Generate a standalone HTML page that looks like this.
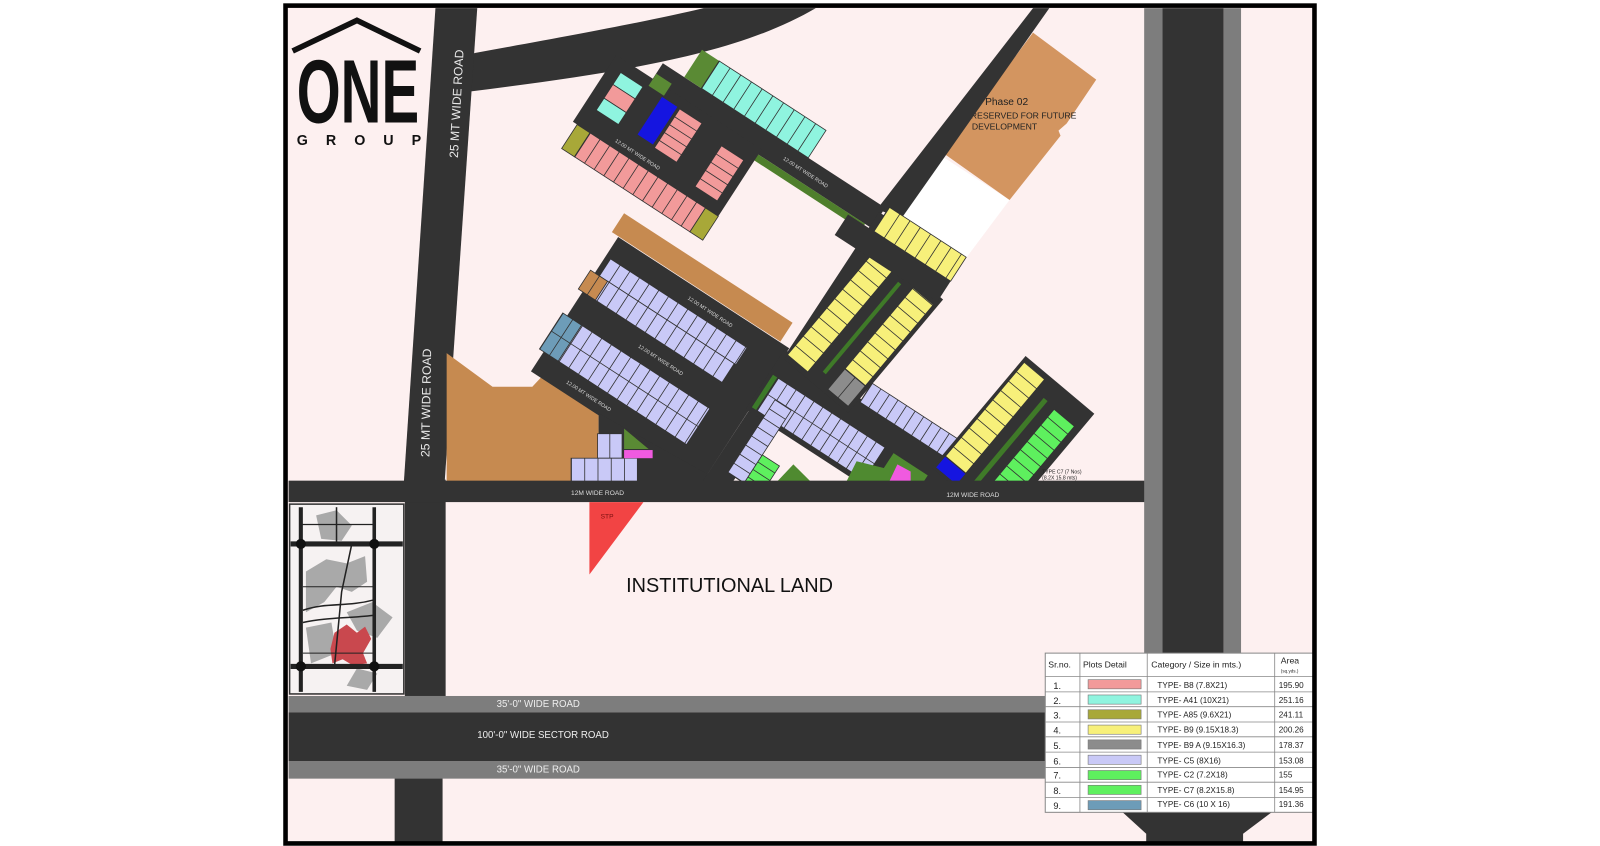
<!DOCTYPE html>
<html><head><meta charset="utf-8"><style>
html,body{margin:0;padding:0;background:#fff;width:1600px;height:846px;overflow:hidden}
svg{display:block}
text{font-family:"Liberation Sans",sans-serif}
</style></head><body>
<svg width="1600" height="846" viewBox="0 0 1569 829" preserveAspectRatio="none" xmlns="http://www.w3.org/2000/svg">
<defs><clipPath id="cl"><rect x="283" y="8" width="840" height="465"/></clipPath></defs>
<rect x="0" y="0" width="1569" height="829" fill="#fff"/>
<rect x="280" y="5" width="1009" height="822" fill="#fdf0f0"/>

<!-- curved road -->
<path d="M465,52 C560,35 640,20 690,8 L800,8 C720,55 600,72 458,90 Z" fill="#333"/>
<!-- left vertical road -->
<polygon points="427,8 468,8 436,473 396,473" fill="#333"/>
<rect x="397" y="470" width="40" height="212" fill="#333"/>
<rect x="387" y="760" width="47" height="68" fill="#333"/>
<!-- brown area -->
<polygon points="438,346 483,379 522,379 536,364 587,407 587,474 438,474" fill="#c68a50"/>

<!-- phase 02 -->
<polygon points="922,152 990,196 948,252 872,203" fill="#ffffff"/>
<polygon points="1013,32 1075,78 1046,121 1038,128 1040,133 990,196 925,150" fill="#d39560"/>
<text x="966" y="103" font-size="10" fill="#222">Phase 02</text>
<text x="952" y="116" font-size="8.5" fill="#222">RESERVED FOR FUTURE</text>
<text x="953" y="127" font-size="8.5" fill="#222">DEVELOPMENT</text>
<!-- NE road -->
<polygon points="1013,8 1029,8 884,214 860,205" fill="#333"/>

<g clip-path="url(#cl)">
<!-- R1 road + cyan row -->
<g transform="translate(650,62) rotate(33)">
<rect x="0" y="0" width="260" height="24" fill="#333"/>
<rect x="25" y="-32" width="20" height="32" fill="#5a8a34"/>
<rect x="45" y="-32" width="125" height="32" fill="#8ff4df" stroke="#333" stroke-width=".8"/>
<line x1="45" y1="-16" x2="170" y2="-16" stroke="#333" stroke-width="32" stroke-dasharray="0.8 11.7"/>
<rect x="112" y="24" width="140" height="7" fill="#4f7f2c"/>
<text x="150" y="15" font-size="5" fill="#ddd">12.00 MT WIDE ROAD</text>
</g>
<!-- pink cluster -->
<g transform="translate(566,122) rotate(33)">
<rect x="-5" y="-78" width="170" height="78" fill="#333"/>
<rect x="0" y="0" width="15" height="28" fill="#a8a838" stroke="#333" stroke-width=".8"/>
<rect x="15" y="0" width="135" height="28" fill="#f29a9a" stroke="#333" stroke-width=".8"/>
<line x1="15" y1="14" x2="150" y2="14" stroke="#333" stroke-width="28" stroke-dasharray="0.8 10.5"/>
<rect x="150" y="0" width="15" height="28" fill="#a8a838" stroke="#333" stroke-width=".8"/>
<rect x="8" y="-66" width="26" height="14" fill="#8ff4df" stroke="#333" stroke-width=".8"/>
<rect x="8" y="-52" width="26" height="16" fill="#f29a9a" stroke="#333" stroke-width=".8"/>
<rect x="8" y="-36" width="26" height="14" fill="#8ff4df" stroke="#333" stroke-width=".8"/>
<rect x="38" y="-84" width="18" height="14" fill="#5a8a34"/>
<rect x="55" y="-68" width="18" height="44" fill="#1515e0"/>
<rect x="76" y="-68" width="26" height="46" fill="#f29a9a" stroke="#333" stroke-width=".8"/>
<line x1="89" y1="-68" x2="89" y2="-22" stroke="#333" stroke-width="26" stroke-dasharray="0.8 8.4"/>
<rect x="130" y="-60" width="26" height="48" fill="#f29a9a" stroke="#333" stroke-width=".8"/>
<line x1="143" y1="-60" x2="143" y2="-12" stroke="#333" stroke-width="26" stroke-dasharray="0.8 8.8"/>
<text x="40" y="-6" font-size="5" fill="#ddd">12.00 MT WIDE ROAD</text>
</g>
<!-- brown band -->
<g transform="translate(612,209) rotate(33)"><rect width="197" height="22" fill="#c68a50"/></g>
<!-- lavender blocks -->
<g transform="translate(590,248) rotate(33)">
<rect x="5" y="-22" width="200" height="157" fill="#333"/>
<rect x="10" y="0" width="160" height="20" fill="#c9c9f7" stroke="#333" stroke-width=".8"/>
<rect x="0" y="20" width="20" height="22" fill="#c68a50" stroke="#333" stroke-width=".8"/>
<rect x="20" y="20" width="148" height="22" fill="#c9c9f7" stroke="#333" stroke-width=".8"/>
<line x1="10" y1="21" x2="170" y2="21" stroke="#333" stroke-width="42" stroke-dasharray="0.8 10.5"/>
<rect x="0" y="70" width="22" height="42" fill="#6d9cb8" stroke="#333" stroke-width=".8"/>
<rect x="22" y="70" width="150" height="42" fill="#c9c9f7" stroke="#333" stroke-width=".8"/>
<line x1="0" y1="91" x2="172" y2="91" stroke="#333" stroke-width="42" stroke-dasharray="0.8 10.5"/>
<line x1="0" y1="91" x2="172" y2="91" stroke="#333" stroke-width=".8"/>
<text x="80" y="58" font-size="5" fill="#ddd">12.00 MT WIDE ROAD</text>
<text x="40" y="126" font-size="5" fill="#ddd">12.00 MT WIDE ROAD</text>
<text x="95" y="-8" font-size="5" fill="#ddd">12.00 MT WIDE ROAD</text>
</g>
<polygon points="587,405 700,468 705,474 587,474" fill="#333"/>
<rect x="586" y="425" width="24" height="24" fill="#c9c9f7" stroke="#333" stroke-width=".8"/>
<line x1="598" y1="425" x2="598" y2="449" stroke="#333" stroke-width=".8"/>
<rect x="560" y="449" width="65" height="24" fill="#c9c9f7" stroke="#333" stroke-width=".8"/>
<line x1="560" y1="461" x2="625" y2="461" stroke="#333" stroke-width="24" stroke-dasharray="0.8 12.2"/>
<polygon points="612,420 612,440 636,440" fill="#5a8a34"/>
<rect x="612" y="441" width="28" height="8" fill="#f05ae0"/>
<!-- D1 road -->
<polygon points="688,473 718,473 885,222 862,208" fill="#333"/>
<!-- lower lavender -->
<g transform="translate(775,352) rotate(33)">
<rect x="-10" y="-5" width="205" height="70" fill="#333"/>
<rect x="80" y="-24" width="100" height="22" fill="#c9c9f7" stroke="#333" stroke-width=".8"/>
<line x1="80" y1="-13" x2="180" y2="-13" stroke="#333" stroke-width="22" stroke-dasharray="0.8 9.2"/>
<rect x="0" y="22" width="125" height="38" fill="#c9c9f7" stroke="#333" stroke-width=".8"/>
<line x1="0" y1="41" x2="125" y2="41" stroke="#333" stroke-width="38" stroke-dasharray="0.8 9.6"/>
<line x1="0" y1="41" x2="125" y2="41" stroke="#333" stroke-width=".8"/>
<rect x="-6" y="22" width="5" height="38" fill="#3c7a2a"/>
<rect x="135" y="22" width="40" height="40" fill="#4f8a30"/>
</g>
<g transform="translate(712,462) rotate(-57)">
<rect x="0" y="2" width="85" height="19" fill="#c9c9f7" stroke="#333" stroke-width=".8"/>
<line x1="0" y1="11.5" x2="85" y2="11.5" stroke="#333" stroke-width="19" stroke-dasharray="0.8 9.8"/>
<rect x="-2" y="21" width="35" height="20" fill="#5ef05e" stroke="#333" stroke-width=".8"/>
<line x1="-2" y1="31" x2="33" y2="31" stroke="#333" stroke-width="20" stroke-dasharray="0.8 8"/>
</g>
<polygon points="762,472 778,455 795,472" fill="#4f8a30"/>
<polygon points="830,472 840,452 872,460 872,472" fill="#4f8a30"/>
<polygon points="872,472 880,455 893,462 893,472" fill="#f05ae0"/>
<!-- yellow columns -->
<g transform="translate(772,348) rotate(-50)">
<rect x="-5" y="0" width="145" height="82" fill="#333"/>
<rect x="0" y="0" width="130" height="26" fill="#f7f07a" stroke="#333" stroke-width=".8"/>
<line x1="0" y1="13" x2="130" y2="13" stroke="#333" stroke-width="26" stroke-dasharray="0.8 11.2"/>
<rect x="10" y="37" width="115" height="4" fill="#3f7a28"/>
<rect x="0" y="52" width="26" height="26" fill="#8c8c8c" stroke="#333" stroke-width=".8"/>
<line x1="0" y1="65" x2="26" y2="65" stroke="#333" stroke-width=".8"/>
<rect x="26" y="52" width="104" height="26" fill="#f7f07a" stroke="#333" stroke-width=".8"/>
<line x1="26" y1="65" x2="130" y2="65" stroke="#333" stroke-width="26" stroke-dasharray="0.8 10.6"/>
</g>
<g transform="translate(872,203) rotate(33)">
<rect x="-30" y="28" width="120" height="24" fill="#333"/>
<rect x="0" y="0" width="90" height="28" fill="#f7f07a" stroke="#333" stroke-width=".8"/>
<line x1="0" y1="14" x2="90" y2="14" stroke="#333" stroke-width="28" stroke-dasharray="0.8 11.2"/>
</g>
<!-- lower right yellow/green -->
<g transform="translate(918,458) rotate(-50)">
<rect x="-3" y="-3" width="143" height="88" fill="#333"/>
<rect x="0" y="0" width="14" height="26" fill="#1515e0"/>
<rect x="14" y="0" width="121" height="26" fill="#f7f07a" stroke="#333" stroke-width=".8"/>
<line x1="14" y1="13" x2="135" y2="13" stroke="#333" stroke-width="26" stroke-dasharray="0.8 11.2"/>
<rect x="8" y="37" width="112" height="5" fill="#3f7a28"/>
<rect x="0" y="52" width="14" height="26" fill="#f05ae0"/>
<rect x="14" y="52" width="104" height="26" fill="#5ef05e" stroke="#333" stroke-width=".8"/>
<line x1="14" y1="65" x2="118" y2="65" stroke="#333" stroke-width="26" stroke-dasharray="0.8 9.6"/>
</g>
</g>
<text x="1022" y="464" font-size="5" fill="#222">TYPE C7 (7 Nos)</text>
<text x="1022" y="470" font-size="5" fill="#222">(8.2X 15.8 mts)</text>

<!-- 12M horizontal road -->
<rect x="283" y="471" width="840" height="21" fill="#333"/>
<text x="560" y="485" font-size="6.5" fill="#ddd">12M WIDE ROAD</text>
<text x="928" y="487" font-size="6.5" fill="#ddd">12M WIDE ROAD</text>

<!-- right vertical road -->
<rect x="1122" y="8" width="18" height="640" fill="#7d7d7d"/>
<rect x="1140" y="8" width="60" height="790" fill="#333"/>
<rect x="1200" y="8" width="17" height="640" fill="#7d7d7d"/>
<polygon points="1101,796 1247,796 1219,817 1219,828 1124,828 1124,817" fill="#333"/>

<!-- STP -->
<polygon points="578,492 631,492 578,563" fill="#f24444"/>
<text x="589" y="508" font-size="6.5" fill="#7a1010">STP</text>
<text x="614" y="580" font-size="19.5" fill="#111">INSTITUTIONAL LAND</text>

<!-- sector roads -->
<rect x="283" y="682" width="745" height="16" fill="#7d7d7d"/>
<rect x="283" y="698" width="745" height="48" fill="#333"/>
<rect x="283" y="746" width="745" height="17" fill="#7d7d7d"/>
<text x="487" y="693" font-size="9.5" fill="#eee">35'-0"  WIDE  ROAD</text>
<text x="468" y="723" font-size="9.5" fill="#eee">100'-0"  WIDE SECTOR ROAD</text>
<text x="487" y="757" font-size="9.5" fill="#eee">35'-0"  WIDE  ROAD</text>

<!-- road labels -->
<text transform="translate(449,155) rotate(-87)" font-size="12" fill="#e8e8e8">25 MT WIDE ROAD</text>
<text transform="translate(421,448) rotate(-89)" font-size="12" fill="#e8e8e8">25 MT WIDE ROAD</text>

<!-- inset map -->
<rect x="284" y="494" width="112" height="186" fill="#f6f2f2" stroke="#333" stroke-width="1.5"/>
<g fill="#a9a9a9">
<polygon points="300,560 320,548 340,552 358,545 360,570 345,580 330,575 318,590 300,600"/>
<polygon points="310,505 330,500 345,515 335,530 315,528"/>
<polygon points="340,600 365,590 385,605 370,625 350,618"/>
<polygon points="300,615 325,610 330,640 305,650"/>
<polygon points="350,655 370,660 360,676 340,672"/>
</g>
<g fill="#c9484e">
<polygon points="328,620 340,612 350,620 358,614 364,626 356,640 360,650 346,652 336,646 326,650 324,636"/>
</g>
<g stroke="#222" fill="none">
<line x1="285" y1="533" x2="395" y2="533" stroke-width="5"/>
<line x1="285" y1="653" x2="395" y2="653" stroke-width="5"/>
<line x1="295" y1="497" x2="295" y2="678" stroke-width="4"/>
<line x1="367" y1="497" x2="367" y2="678" stroke-width="3.5"/>
<line x1="330" y1="497" x2="330" y2="533" stroke-width="1.5"/>
<line x1="295" y1="514" x2="367" y2="514" stroke-width="1.2"/>
<path d="M345,533 L335,580 L328,653" stroke-width="1.5"/>
<path d="M297,598 C320,590 340,595 366,588" stroke-width="1.5"/>
<path d="M297,610 C320,605 340,606 366,603" stroke-width="1.5"/>
<line x1="297" y1="575" x2="366" y2="575" stroke-width="1"/>
<line x1="297" y1="640" x2="366" y2="640" stroke-width="1"/>
</g>
<g fill="#111"><circle cx="295" cy="533" r="5"/><circle cx="367" cy="533" r="5"/><circle cx="295" cy="653" r="5"/><circle cx="367" cy="653" r="5"/></g>

<!-- table -->
<g font-size="8.5" fill="#222">
<rect x="1025" y="640" width="265" height="156" fill="#fff" stroke="#888" stroke-width="1"/>
<g stroke="#888" stroke-width=".8">
<line x1="1059" y1="640" x2="1059" y2="796"/>
<line x1="1125" y1="640" x2="1125" y2="796"/>
<line x1="1250" y1="640" x2="1250" y2="796"/>
<line x1="1025" y1="663" x2="1290" y2="663"/>
<line x1="1025" y1="678" x2="1290" y2="678"/>
<line x1="1025" y1="692.5" x2="1290" y2="692.5"/>
<line x1="1025" y1="707.5" x2="1290" y2="707.5"/>
<line x1="1025" y1="722" x2="1290" y2="722"/>
<line x1="1025" y1="737" x2="1290" y2="737"/>
<line x1="1025" y1="752" x2="1290" y2="752"/>
<line x1="1025" y1="766.5" x2="1290" y2="766.5"/>
<line x1="1025" y1="781.5" x2="1290" y2="781.5"/>
</g>
<text x="1028" y="654">Sr.no.</text>
<text x="1062" y="654">Plots Detail</text>
<text x="1129" y="654">Category / Size in mts.)</text>
<text x="1256" y="650">Area</text>
<text x="1256" y="659" font-size="4.5">(sq.yds.)</text>
<g stroke="#777" stroke-width=".6">
<rect x="1067" y="666" width="52" height="9" fill="#f29a9a"/>
<rect x="1067" y="681" width="52" height="9" fill="#8ff4df"/>
<rect x="1067" y="695.5" width="52" height="9" fill="#a8a838"/>
<rect x="1067" y="710.5" width="52" height="9" fill="#f7f07a"/>
<rect x="1067" y="725" width="52" height="9" fill="#8c8c8c"/>
<rect x="1067" y="740" width="52" height="9" fill="#c9c9f7"/>
<rect x="1067" y="755" width="52" height="9" fill="#5ef05e"/>
<rect x="1067" y="769.5" width="52" height="9" fill="#5ef05e"/>
<rect x="1067" y="784.5" width="52" height="9" fill="#6d9cb8"/>
</g>
<g font-size="9">
<text x="1033" y="675">1.</text><text x="1033" y="690">2.</text><text x="1033" y="704">3.</text>
<text x="1033" y="719">4.</text><text x="1033" y="734">5.</text><text x="1033" y="749">6.</text>
<text x="1033" y="763">7.</text><text x="1033" y="778">8.</text><text x="1033" y="793">9.</text>
</g>
<g font-size="8">
<text x="1135" y="674">TYPE- B8  (7.8X21)</text>
<text x="1135" y="689">TYPE- A41  (10X21)</text>
<text x="1135" y="703">TYPE- A85  (9.6X21)</text>
<text x="1135" y="718">TYPE- B9  (9.15X18.3)</text>
<text x="1135" y="733">TYPE- B9 A  (9.15X16.3)</text>
<text x="1135" y="748">TYPE- C5  (8X16)</text>
<text x="1135" y="762">TYPE- C2  (7.2X18)</text>
<text x="1135" y="777">TYPE- C7  (8.2X15.8)</text>
<text x="1135" y="791">TYPE- C6  (10 X 16)</text>
<text x="1254" y="674">195.90</text><text x="1254" y="689">251.16</text><text x="1254" y="703">241.11</text>
<text x="1254" y="718">200.26</text><text x="1254" y="733">178.37</text><text x="1254" y="748">153.08</text>
<text x="1254" y="762">155</text><text x="1254" y="777">154.95</text><text x="1254" y="791">191.36</text>
</g>
</g>

<!-- logo -->
<path d="M287,50 L350,20 L412,50" fill="none" stroke="#111" stroke-width="5.5"/>
<text x="291" y="120" font-size="88" font-weight="bold" fill="#111" textLength="120" lengthAdjust="spacingAndGlyphs">ONE</text>
<text x="291" y="142" font-size="14" font-weight="bold" fill="#111" textLength="122" lengthAdjust="spacing">GROUP</text>

<!-- frame -->
<rect x="280" y="5.5" width="1009" height="821" fill="none" stroke="#000" stroke-width="4.5"/>
</svg>
</body></html>
